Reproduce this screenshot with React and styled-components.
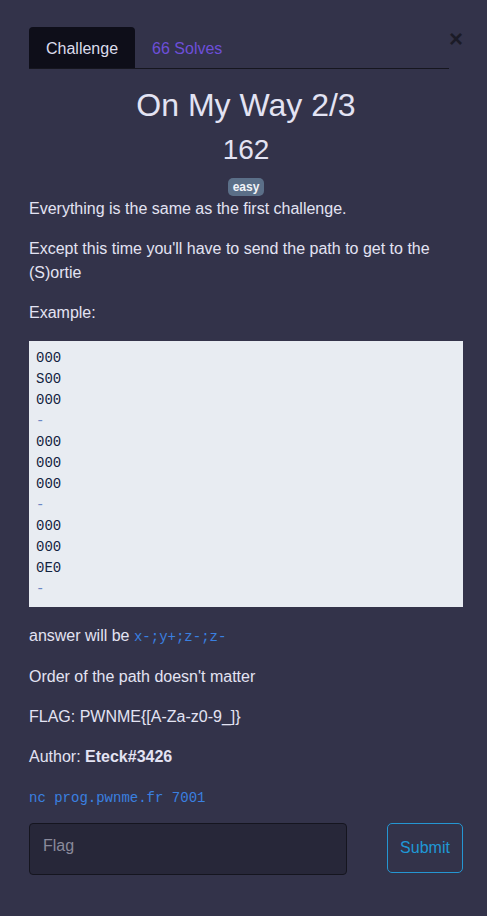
import React from 'react';
import styled, { createGlobalStyle } from 'styled-components';

const GlobalStyle = createGlobalStyle`
  html, body {
    margin: 0;
    background: #33334a;
  }
  body {
    font-family: "Liberation Sans", Arial, sans-serif;
    color: #e3e3f3;
  }
`;

const Modal = styled.div`
  padding: 27px 24px 40px 29px;
  min-height: 916px;
  box-sizing: border-box;
`;

const Header = styled.div`
  display: flex;
  align-items: flex-start;
`;

const Tabs = styled.nav`
  flex: 1;
  display: flex;
  border-bottom: 1px solid #16161f;
`;

const Tab = styled.div`
  height: 41px;
  box-sizing: border-box;
  padding: 2px 17px 0;
  display: flex;
  align-items: center;
  font-size: 16px;
  border-radius: 4px 4px 0 0;
  background: ${(props) => (props.active ? '#0e0e19' : 'transparent')};
  color: ${(props) => (props.active ? '#dcdcec' : '#6d4fd9')};
`;

const Close = styled.button`
  width: 14px;
  padding: 0;
  border: none;
  background: none;
  font-family: "Liberation Sans", Arial, sans-serif;
  font-size: 24px;
  font-weight: 700;
  line-height: 1;
  color: #1b1b27;
  cursor: pointer;
`;

const Title = styled.h1`
  margin: 17px 0 0;
  text-align: center;
  font-size: 32px;
  font-weight: 400;
  line-height: 1.2;
`;

const Value = styled.h2`
  margin: 9px 0 0;
  text-align: center;
  font-size: 28px;
  font-weight: 400;
  line-height: 1.2;
`;

const BadgeRow = styled.div`
  display: flex;
  justify-content: center;
  margin-top: 11px;
`;

const Badge = styled.span`
  background: #5b6f88;
  color: #f2f4f8;
  font-size: 12px;
  font-weight: 700;
  line-height: 18px;
  padding: 0 5px;
  border-radius: 5px;
`;

const Description = styled.div`
  margin-top: 1px;
  font-size: 16px;
  line-height: 24px;

  p {
    margin: 0 0 16px;
  }
`;

const Pre = styled.pre`
  margin: 0 0 17px;
  padding: 7px;
  background: #e8ecf2;
  color: #13233f;
  font-family: "Liberation Mono", "Courier New", monospace;
  font-size: 14px;
  line-height: 21px;
`;

const Sep = styled.span`
  color: #6a88c4;
`;

const Code = styled.code`
  font-family: "Liberation Mono", "Courier New", monospace;
  font-size: 14px;
  color: #3a80e0;
`;

const Form = styled.form`
  display: flex;
  justify-content: space-between;
  align-items: flex-start;
  margin-top: 13px;
`;

const FlagInput = styled.input`
  width: 318px;
  height: 52px;
  box-sizing: border-box;
  padding: 0 13px 6px;
  border: 1px solid #15151f;
  border-radius: 4px;
  background: #272739;
  color: #e3e3f3;
  font-family: "Liberation Sans", Arial, sans-serif;
  font-size: 16px;

  &::placeholder {
    color: #8a8a9b;
  }
`;

const Submit = styled.button`
  width: 76px;
  height: 50px;
  box-sizing: border-box;
  border: 1px solid #2596d2;
  border-radius: 5px;
  background: transparent;
  color: #1f98d6;
  font-family: "Liberation Sans", Arial, sans-serif;
  font-size: 16px;
  padding: 0;
`;

const grid = [
  ['000', 'S00', '000'],
  ['000', '000', '000'],
  ['000', '000', '0E0'],
];

const App = () => (
  <>
    <GlobalStyle />
    <Modal>
      <Header>
        <Tabs>
          <Tab active>Challenge</Tab>
          <Tab>66 Solves</Tab>
        </Tabs>
        <Close>×</Close>
      </Header>

      <Title>On My Way 2/3</Title>
      <Value>162</Value>
      <BadgeRow>
        <Badge>easy</Badge>
      </BadgeRow>

      <Description>
        <p>Everything is the same as the first challenge.</p>
        <p>Except this time you'll have to send the path to get to the (S)ortie</p>
        <p>Example:</p>
        <Pre>
          {grid.map((layer, i) => (
            <React.Fragment key={i}>
              {layer.join('\n')}
              {'\n'}
              <Sep>-</Sep>
              {i < grid.length - 1 ? '\n' : ''}
            </React.Fragment>
          ))}
        </Pre>
        <p>
          answer will be <Code>x-;y+;z-;z-</Code>
        </p>
        <p>Order of the path doesn't matter</p>
        <p>FLAG: PWNME{'{'}[A-Za-z0-9_]{'}'}</p>
        <p>
          Author: <b>Eteck#3426</b>
        </p>
        <p style={{ marginBottom: 0 }}>
          <Code>nc prog.pwnme.fr 7001</Code>
        </p>
      </Description>

      <Form onSubmit={(e) => e.preventDefault()}>
        <FlagInput placeholder="Flag" />
        <Submit>Submit</Submit>
      </Form>
    </Modal>
  </>
);

export default App;
